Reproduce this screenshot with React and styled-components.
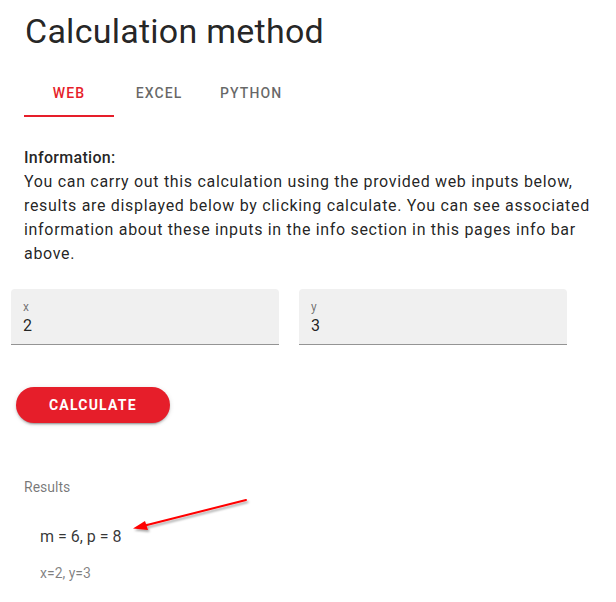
import styled, { createGlobalStyle } from "styled-components";

const GlobalStyle = createGlobalStyle`
body {
  margin: 0;
  background: #ffffff;
  font-family: Roboto, "Liberation Sans", Arial, sans-serif;
  color: rgba(0, 0, 0, 0.87);
}
* { box-sizing: border-box; }
`

export default function App() {
    return (
        <Page>
            <GlobalStyle />
            <Title>Calculation method</Title>
            <Tabs>
                <Tab active>Web</Tab>
                <Tab>Excel</Tab>
                <Tab>Python</Tab>
            </Tabs>
            <Info>
                <InfoHead>Information:</InfoHead>
                You can carry out this calculation using the provided web inputs below,<br />
                results are displayed below by clicking calculate. You can see associated<br />
                information about these inputs in the info section in this pages info bar<br />
                above.
            </Info>
            <Fields>
                <Field>
                    <FieldLabel>x</FieldLabel>
                    <FieldValue>2</FieldValue>
                </Field>
                <Field>
                    <FieldLabel>y</FieldLabel>
                    <FieldValue>3</FieldValue>
                </Field>
            </Fields>
            <CalcButton>Calculate</CalcButton>
            <Results>
                <ResultsLabel>Results</ResultsLabel>
                <ResultValue>m = 6, p = 8</ResultValue>
                <ResultInputs>x=2, y=3</ResultInputs>
                <Arrow width="130" height="45" viewBox="0 0 130 45">
                    <defs>
                        <filter id="arrowShadow" x="-10%" y="-30%" width="130%" height="180%">
                            <feDropShadow dx="1.5" dy="2" stdDeviation="1.2" floodColor="#000" floodOpacity="0.35" />
                        </filter>
                    </defs>
                    <g filter="url(#arrowShadow)">
                        <line x1="123" y1="6" x2="20" y2="32" stroke="#ff0000" strokeWidth="2" strokeLinecap="round" />
                        <polygon points="10,34.5 22,27 25,36" fill="#ff0000" />
                    </g>
                </Arrow>
            </Results>
        </Page>
    );
}

const Page = styled.div`
position: relative;
width: 616px;
min-height: 602px;
padding: 10px 24px 0 24px;
`

const Title = styled.h1`
margin: 0 0 0 1px;
font-size: 34px;
line-height: 42px;
font-weight: 400;
letter-spacing: 0.25px;
color: rgba(0, 0, 0, 0.87);
`

const Tabs = styled.div`
display: flex;
margin-top: 17px;
height: 48px;
`

const Tab = styled.div`
min-width: 90px;
height: 48px;
padding: 0 16px;
display: flex;
align-items: center;
justify-content: center;
font-size: 14px;
font-weight: 500;
letter-spacing: 1.1px;
text-transform: uppercase;
color: ${p => p.active ? "#e61e2a" : "rgba(0, 0, 0, 0.6)"};
border-bottom: 2px solid ${p => p.active ? "#e61e2a" : "transparent"};
padding-top: 2px;
`

const Info = styled.div`
margin-top: 29px;
white-space: nowrap;
font-size: 16px;
line-height: 24px;
letter-spacing: 0.68px;
color: rgba(0, 0, 0, 0.87);
`

const InfoHead = styled.div`
font-weight: 500;
letter-spacing: 0.3px;
`

const Fields = styled.div`
display: flex;
gap: 20px;
margin: 23px -13px 0 -13px;
`

const Field = styled.div`
width: 268px;
height: 56px;
display: flex;
flex-direction: column;
padding: 12px 12px 0 12px;
background: #f0f0f0;
border-radius: 4px 4px 0 0;
border-bottom: 1px solid #949494;
`

const FieldLabel = styled.div`
font-size: 12px;
line-height: 12px;
color: rgba(0, 0, 0, 0.54);
`

const FieldValue = styled.div`
margin-top: 1px;
font-size: 16px;
line-height: 23px;
color: rgba(0, 0, 0, 0.87);
`

const CalcButton = styled.button`
display: block;
margin: 42px 0 0 -8px;
height: 36px;
padding: 0 33px;
border: none;
border-radius: 18px;
background: #e61e2a;
color: #ffffff;
font-family: Roboto, "Liberation Sans", Arial, sans-serif;
font-size: 14px;
font-weight: 700;
letter-spacing: 1.2px;
text-transform: uppercase;
box-shadow: 0px 3px 1px -2px rgba(0,0,0,0.2), 0px 2px 2px 0px rgba(0,0,0,0.14), 0px 1px 5px 0px rgba(0,0,0,0.12);
`

const Results = styled.div`
position: relative;
margin-top: 54px;
`

const ResultsLabel = styled.div`
font-size: 14px;
line-height: 20px;
color: rgba(0, 0, 0, 0.54);
`

const ResultValue = styled.div`
margin: 28px 0 0 16px;
font-size: 16px;
line-height: 24px;
color: rgba(0, 0, 0, 0.8);
`

const ResultInputs = styled.div`
margin: 14px 0 0 16px;
font-size: 14px;
line-height: 20px;
color: rgba(0, 0, 0, 0.5);
`

const Arrow = styled.svg`
position: absolute;
left: 99px;
top: 17px;
overflow: visible;
`
